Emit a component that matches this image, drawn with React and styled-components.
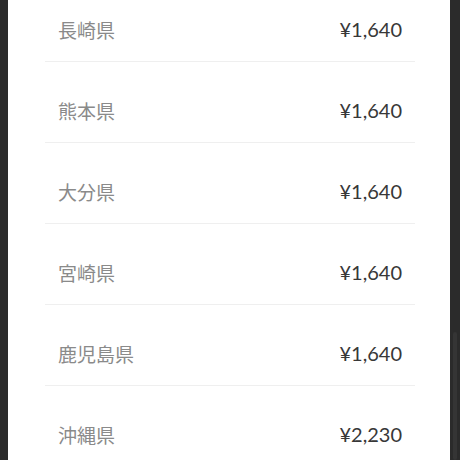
import React from 'react';
import styled, { createGlobalStyle } from 'styled-components';

const rows = [
  { pref: '長崎県', price: '¥1,640' },
  { pref: '熊本県', price: '¥1,640' },
  { pref: '大分県', price: '¥1,640' },
  { pref: '宮崎県', price: '¥1,640' },
  { pref: '鹿児島県', price: '¥1,640' },
  { pref: '沖縄県', price: '¥2,230' },
];

const GlobalStyles = createGlobalStyle`
  * {
    box-sizing: border-box;
    margin: 0;
    padding: 0;
  }

  html, body {
    width: 460px;
    height: 460px;
    overflow: hidden;
    background: #2b2b2b;
    font-family: Lato, 'Noto Sans CJK JP', sans-serif;
  }
`;

const Screen = styled.div`
  position: relative;
  display: flex;
  height: 460px;
  padding: 0 10px 0 8px;
`;

const Panel = styled.div`
  flex: 1;
  background: #fff;
  padding: 0 35px 0 37px;
  overflow: hidden;
`;

const List = styled.ul`
  list-style: none;
  margin-top: -19px;
`;

const Row = styled.li`
  display: flex;
  align-items: center;
  justify-content: space-between;
  height: 81px;
  padding: 16px 13px 0;
  border-bottom: 1px solid #efefef;
`;

const Pref = styled.span`
  font-family: 'Noto Sans CJK JP', sans-serif;
  font-size: 19px;
  color: #8a8a8a;
  margin-top: 1px;
`;

const Price = styled.span`
  font-family: Lato, sans-serif;
  font-size: 20px;
  color: #383838;
`;

const ScrollThumb = styled.div`
  position: absolute;
  right: 3px;
  top: 332px;
  width: 4px;
  height: 128px;
  border-radius: 2px;
  background: #353535;
`;

const App = () => (
  <>
    <GlobalStyles />
    <Screen>
      <Panel>
        <List>
          {rows.map((r) => (
            <Row key={r.pref}>
              <Pref>{r.pref}</Pref>
              <Price>{r.price}</Price>
            </Row>
          ))}
        </List>
      </Panel>
      <ScrollThumb />
    </Screen>
  </>
);

export default App;
